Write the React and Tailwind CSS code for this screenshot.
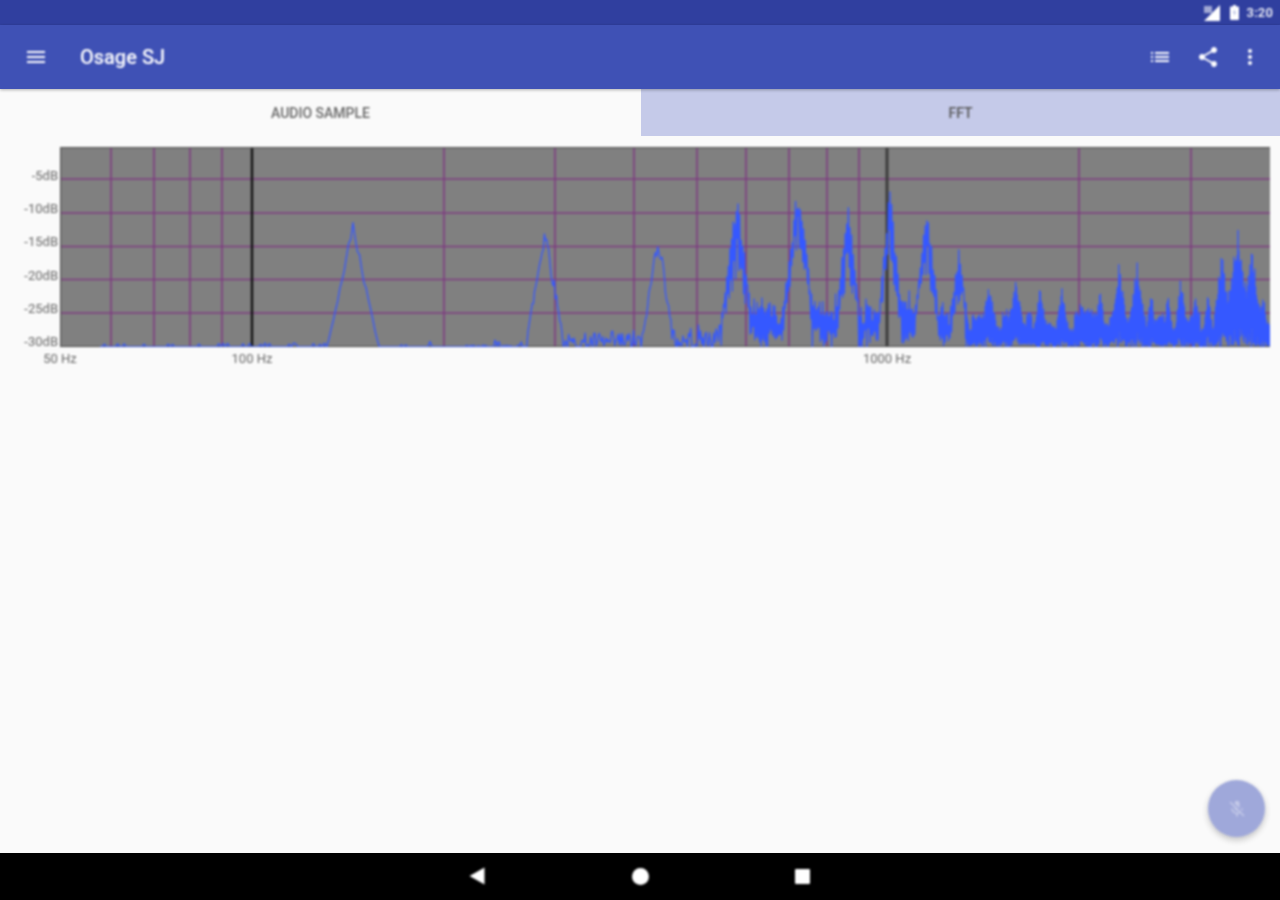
function mulberry(seed) {
  let a = seed;
  return () => {
    a |= 0; a = (a + 0x6d2b79f5) | 0;
    let t = Math.imul(a ^ (a >>> 15), 1 | a);
    t = (t + Math.imul(t ^ (t >>> 7), 61 | t)) ^ t;
    return ((t ^ (t >>> 14)) >>> 0) / 4294967296;
  };
}

const BASE = 347;
// x, top y, half width of each spectral peak
const PEAKS = [
  [353, 220, 26], [545, 216, 20], [658, 222, 17], [737, 190, 20], [798, 176, 20],
  [848, 200, 16], [890, 184, 15], [927, 195, 16], [959, 246, 13], [989, 276, 11],
  [1016, 274, 12], [1040, 285, 9], [1062, 287, 9], [1082, 297, 11], [1100, 287, 8],
  [1119, 262, 12], [1137, 260, 12], [1151, 286, 7], [1168, 292, 7], [1181, 274, 8],
  [1195, 286, 7], [1208, 288, 7], [1222, 246, 11], [1238, 230, 18], [1252, 246, 13], [1263, 294, 9],
];

const cellRnd = mulberry(7);
const CELLS = Array.from({ length: 400 }, () => cellRnd());

function floorHeight(x) {
  if (x < 330) return 4;
  if (x < 520) return 2 + (x % 70 < 12 ? 5 : 0);
  if (x < 720) return 10 + ((x - 520) / 200) * 14;
  if (x < 965) return 30 + 28 * CELLS[Math.floor(x / 5) % 400];
  return 10 + 30 * CELLS[Math.floor(x / 6) % 400];
}

function buildTrace() {
  const rnd = mulberry(42);
  const pts = [];
  let x = 100;
  let flip = false;
  while (x < 1270) {
    let env = 0;
    let onPeak = false;
    for (const [px, top, hw] of PEAKS) {
      const d = Math.abs(x - px) / hw;
      if (d < 1) {
        const h = (BASE - top) * Math.pow(1 - d, 1.05);
        if (h > env) { env = h; onPeak = true; }
      }
    }
    const fl = floorHeight(x);
    const r = rnd();
    flip = !flip;
    let h;
    if (onPeak && x < 720 && env > fl) {
      h = env * ((x < 450 ? 0.9 : 0.78) + (x < 450 ? 0.1 : 0.22) * r);
    } else if (x >= 965) {
      const top = Math.max(env, fl);
      h = flip ? top * (0.74 + 0.26 * r) : top * r * 0.2;
    } else if (onPeak && env > fl) {
      h = flip ? env * (0.84 + 0.16 * r) : env * (0.45 + 0.35 * r);
    } else if (x > 720) {
      h = flip ? fl * (0.55 + 0.45 * r) : fl * r * 0.4;
    } else {
      h = fl * r * r;
      if (x < 520 && r < 0.8) h = 0;
    }
    pts.push(`${x.toFixed(1)},${(BASE - h).toFixed(1)}`);
    x += x < 450 ? 2.2 : x < 720 ? 1.1 : x < 965 ? 0.8 : 0.4;
  }
  return pts.join(" ");
}

const TRACE = buildTrace();
const VERTICAL = [111, 154, 190, 222, 444, 555, 634, 697, 746, 789, 827, 859, 1079, 1191];
const HORIZONTAL = [179, 213, 246.5, 279.5, 313];
const DB = ["-5dB", "-10dB", "-15dB", "-20dB", "-25dB", "-30dB"];

function Chart() {
  return (
    <svg viewBox="60 147 1210 200" className="block w-[1210px] h-[200px] bg-[#808080] shrink-0 blur-[0.8px]">
      {HORIZONTAL.map((y) => (
        <line key={y} x1="60" x2="1270" y1={y} y2={y} stroke="#7e3c80" strokeWidth="1.5" />
      ))}
      {VERTICAL.map((x) => (
        <line key={x} x1={x} x2={x} y1="148" y2="347" stroke="#7e3c80" strokeWidth="1.6" />
      ))}
      <line x1="252" x2="252" y1="148" y2="347" stroke="#111111" strokeWidth="2.4" />
      <line x1="887" x2="887" y1="148" y2="347" stroke="#3c3c3c" strokeWidth="3" />
      <path d="M60.5 347V147.5H1270" fill="none" stroke="#555555" strokeWidth="1.5" />
      <line x1="60" x2="1270" y1="346.5" y2="346.5" stroke="#4a4a4a" strokeWidth="1.2" />
      <polyline points={TRACE} fill="none" stroke="#3558ff" strokeWidth="1.3" strokeLinejoin="round" />
    </svg>
  );
}

function Icon({ d, className }) {
  return (
    <svg viewBox="0 0 24 24" fill="currentColor" className={className}>
      <path d={d} />
    </svg>
  );
}

export default function App() {
  return (
    <div className="relative flex flex-col w-[1280px] h-[900px] overflow-hidden bg-[#fafafa] font-['Roboto',sans-serif]">
      {/* status bar */}
      <div className="flex items-center justify-end h-[25px] bg-[#303f9f] text-white shrink-0 pr-[7px]">
        <svg viewBox="0 0 16 16" className="w-[16px] h-[16px] mr-[10px] blur-[0.8px]" fill="white">
          <path d="M16 0V16H0Z" />
          <path d="M0 1h8v7H0z" fill="white" opacity="0.55" />
        </svg>
        <svg viewBox="0 0 9 15" className="w-[9px] h-[15px] mr-[8px] blur-[0.8px]" fill="white">
          <path d="M3 0h3v1.5h2.2c.4 0 .8.4.8.8v12c0 .4-.4.7-.8.7H.8c-.4 0-.8-.3-.8-.7v-12c0-.4.4-.8.8-.8H3z" />
          <path d="M5 4 2.8 8h1.6l-.7 3.2L6.2 7H4.6z" fill="#aab2dc" />
        </svg>
        <span className="text-[13px] font-medium leading-none tracking-[0.2px] blur-[0.8px]">3:20</span>
      </div>

      {/* toolbar */}
      <div className="relative z-10 flex items-center h-[64px] bg-[#3f51b5] text-white shrink-0 shadow-[0_1px_3px_rgba(0,0,0,0.3)] pl-[24px]">
        <Icon className="w-[24px] h-[24px] blur-[0.8px]" d="M3 18h18v-2H3v2zm0-5h18v-2H3v2zm0-7v2h18V6H3z" />
        <div className="ml-[32px] flex-1">
          <span className="block text-[20px] font-medium leading-none blur-[0.8px]">Osage SJ</span>
        </div>
        <Icon className="w-[24px] h-[24px] mr-[24px] blur-[0.8px]" d="M3 13h2v-2H3v2zm0 4h2v-2H3v2zm0-8h2V7H3v2zm4 4h14v-2H7v2zm0 4h14v-2H7v2zM7 7v2h14V7H7z" />
        <Icon className="w-[24px] h-[24px] mr-[18px] blur-[0.8px]" d="M18 16.08c-.76 0-1.44.3-1.96.77L8.91 12.7c.05-.23.09-.46.09-.7s-.04-.47-.09-.7l7.05-4.11c.54.5 1.25.81 2.04.81 1.66 0 3-1.34 3-3s-1.34-3-3-3-3 1.34-3 3c0 .24.04.47.09.7L8.04 9.81C7.5 9.31 6.79 9 6 9c-1.66 0-3 1.34-3 3s1.34 3 3 3c.79 0 1.5-.31 2.04-.81l7.12 4.16c-.05.21-.08.43-.08.65 0 1.61 1.31 2.92 2.92 2.92 1.61 0 2.92-1.31 2.92-2.92s-1.31-2.92-2.92-2.92z" />
        <Icon className="w-[24px] h-[24px] mr-[18px] blur-[0.8px]" d="M12 8c1.1 0 2-.9 2-2s-.9-2-2-2-2 .9-2 2 .9 2 2 2zm0 2c-1.1 0-2 .9-2 2s.9 2 2 2 2-.9 2-2-.9-2-2-2zm0 6c-1.1 0-2 .9-2 2s.9 2 2 2 2-.9 2-2-.9-2-2-2z" />
      </div>

      {/* tabs */}
      <div className="flex h-[47px] shrink-0 text-[14px] font-medium">
        <div className="flex items-center justify-center w-[641px] pt-[1px] text-[#666666]">
          <span className="blur-[0.8px]">AUDIO SAMPLE</span>
        </div>
        <div className="flex items-center justify-center flex-1 pt-[1px] bg-[#c5cae9] text-[#555555]">
          <span className="blur-[0.8px]">FFT</span>
        </div>
      </div>

      {/* content */}
      <div className="flex-1 pt-[11px]">
        <div className="flex">
          <div className="flex flex-col w-[60px] pt-[12px] text-[13px] leading-none text-[#666666]">
            {DB.map((t) => (
              <div key={t} className="flex items-center justify-end h-[33.2px] pr-[2px]">
                <span className="blur-[0.8px]">{t}</span>
              </div>
            ))}
          </div>
          <Chart />
        </div>
        <div className="flex -mt-[8px] translate-y-[1px] text-[13px] leading-[16px] text-[#666666]">
          <div className="w-[60px] ml-[30px] text-center blur-[0.8px]">50 Hz</div>
          <div className="w-[60px] ml-[132px] text-center blur-[0.8px]">100 Hz</div>
          <div className="w-[60px] ml-[575px] text-center blur-[0.8px]">1000 Hz</div>
        </div>
      </div>

      {/* navigation bar */}
      <div className="flex items-center justify-center h-[47px] bg-black shrink-0 pb-[1px] pr-[2px]">
        <svg viewBox="0 0 16 18" className="w-[16px] h-[18px] mr-[147px] blur-[0.8px]" fill="white">
          <path d="M15.5 0.5V17.5L0.5 9Z" />
        </svg>
        <div className="w-[17px] h-[17px] rounded-full bg-white blur-[0.8px]" />
        <div className="w-[15px] h-[15px] ml-[146px] rounded-[1px] bg-white blur-[0.8px]" />
      </div>

      {/* floating action button */}
      <div className="absolute left-[1208px] top-[780px] flex items-center justify-center w-[57px] h-[57px] rounded-full bg-[#9fa8da] text-[#c5cae9] shadow-[0_3px_6px_rgba(0,0,0,0.22)] blur-[0.8px]">
        <Icon className="w-[20px] h-[20px]" d="M19 11h-1.7c0 .74-.16 1.43-.43 2.05l1.23 1.23c.56-.98.9-2.09.9-3.28zm-4.02.17c0-.06.02-.11.02-.17V5c0-1.66-1.34-3-3-3S9 3.34 9 5v.18l5.98 5.99zM4.27 3L3 4.27l6.01 6.01V11c0 1.66 1.33 3 2.99 3 .22 0 .44-.03.65-.08l1.66 1.66c-.71.33-1.5.52-2.31.52-2.76 0-5.3-2.1-5.3-5.1H5c0 3.41 2.72 6.23 6 6.72V21h2v-3.28c.91-.13 1.77-.45 2.54-.9L19.73 21 21 19.73 4.27 3z" />
      </div>
    </div>
  );
}
